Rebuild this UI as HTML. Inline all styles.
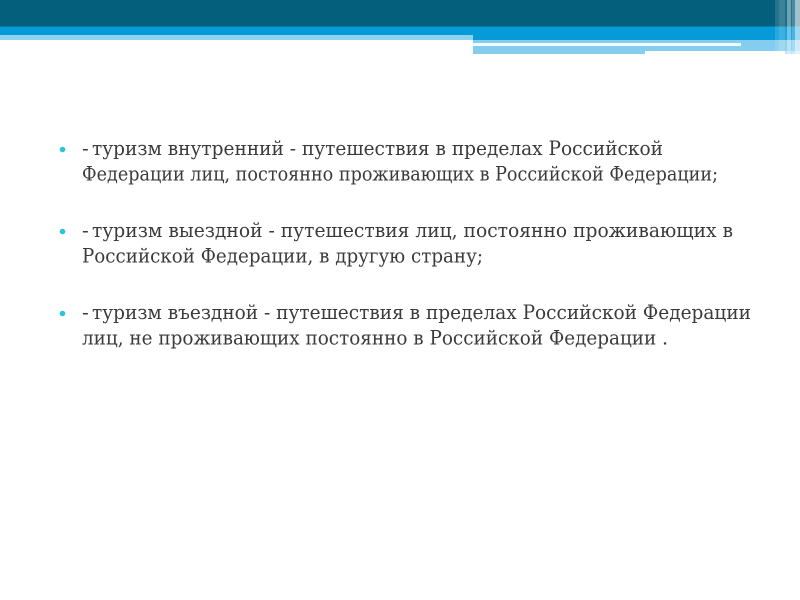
<!DOCTYPE html>
<html lang="ru"><head><meta charset="utf-8"><title>Туризм</title>
<style>
html,body{margin:0;padding:0;background:#fff;width:800px;height:600px;overflow:hidden}
svg{display:block}
text{font-family:"DejaVu Serif","Liberation Serif",serif;font-size:20px;fill:#3a3a3a}
</style></head><body>
<svg width="800" height="600" viewBox="0 0 800 600" xmlns="http://www.w3.org/2000/svg">
<defs><filter id="b" x="-2%" y="-20%" width="104%" height="140%"><feGaussianBlur stdDeviation="0.3"/></filter></defs>
<rect x="0" y="0" width="800" height="26" fill="#045f7c"/>
<rect x="0" y="26" width="800" height="1" fill="#0c7ba3"/>
<rect x="0" y="27" width="800" height="8" fill="#069ad8"/>
<rect x="0" y="35" width="473" height="5" fill="#8fd3f0"/>
<rect x="473" y="35" width="327" height="5" fill="#069ad8"/>
<rect x="473" y="40" width="327" height="3" fill="#85cdee"/>
<rect x="473" y="43" width="268" height="3" fill="#f2fbff"/>
<rect x="741" y="43" width="59" height="3" fill="#85cdee"/>
<rect x="473" y="46" width="327" height="5" fill="#85cdee"/>
<rect x="473" y="51" width="172" height="3" fill="#85cdee"/>
<rect x="785" y="51" width="15" height="3" fill="#b5e2f6"/>
<g fill="#fff">
<rect x="775" y="0" width="4" height="54" opacity=".13"/>
<rect x="779" y="0" width="6" height="54" opacity=".22"/>
<rect x="785" y="0" width="2" height="54" opacity=".1"/>
<rect x="787" y="0" width="4" height="54" opacity=".42"/>
<rect x="791" y="0" width="1" height="54" opacity=".12"/>
<rect x="792" y="0" width="3" height="54" opacity=".28"/>
<rect x="795" y="0" width="5" height="54" opacity=".62"/>
</g>
<circle cx="62.5" cy="149.5" r="2.8" fill="#2cc4d6"/>
<circle cx="62.5" cy="231.5" r="2.8" fill="#2cc4d6"/>
<circle cx="62.5" cy="313.5" r="2.8" fill="#2cc4d6"/>
<g filter="url(#b)">
<text x="82" y="155">-</text>
<text x="92" y="155" textLength="571" lengthAdjust="spacingAndGlyphs">туризм внутренний - путешествия в пределах Российской</text>
<text x="82" y="180.5" textLength="636" lengthAdjust="spacingAndGlyphs">Федерации лиц, постоянно проживающих в Российской Федерации;</text>
<text x="82" y="237">-</text>
<text x="92" y="237" textLength="641" lengthAdjust="spacingAndGlyphs">туризм выездной - путешествия лиц, постоянно проживающих в</text>
<text x="82" y="262.5" textLength="401" lengthAdjust="spacingAndGlyphs">Российской Федерации, в другую страну;</text>
<text x="82" y="319">-</text>
<text x="92" y="319" textLength="659" lengthAdjust="spacingAndGlyphs">туризм въездной - путешествия в пределах Российской Федерации</text>
<text x="82" y="344.5" textLength="586" lengthAdjust="spacingAndGlyphs">лиц, не проживающих постоянно в Российской Федерации .</text>
</g>
</svg>
</body></html>
